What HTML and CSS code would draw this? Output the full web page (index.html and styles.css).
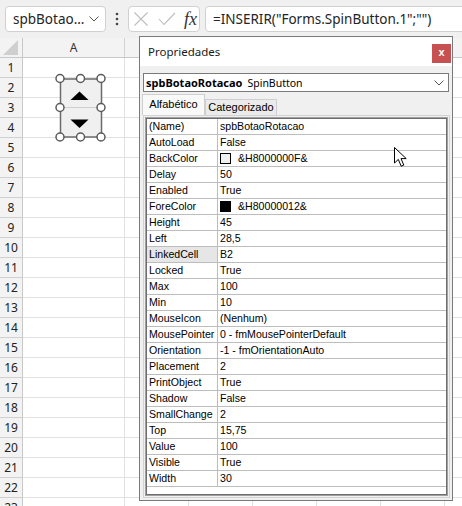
FILE: index.html
```html
<!DOCTYPE html>
<html lang="pt">
<head>
<meta charset="utf-8">
<title>Propriedades</title>
<link rel="stylesheet" href="styles.css">
</head>
<body>
<div class="topbar">
  <div class="namebox"><span>spbBotao...</span><svg width="10" height="6" viewBox="0 0 10 6"><polyline points="0.5,0.5 5,5 9.5,0.5" fill="none" stroke="#555" stroke-width="1"/></svg></div>
  <div class="dots"><svg width="4" height="14" viewBox="0 0 4 14"><circle cx="2" cy="2" r="1.3" fill="#444"/><circle cx="2" cy="7" r="1.3" fill="#444"/><circle cx="2" cy="12" r="1.3" fill="#444"/></svg></div>
  <div class="fxbox">
    <svg width="16" height="16" viewBox="0 0 16 16"><path d="M1.5,1.5 L14.5,14.5 M14.5,1.5 L1.5,14.5" stroke="#bdbdbd" stroke-width="1.1" fill="none"/></svg>
    <svg class="check" width="18" height="14" viewBox="0 0 18 14"><polyline points="1,7 6,12.5 17,1" fill="none" stroke="#bdbdbd" stroke-width="1.1"/></svg>
    <span class="fx">fx</span>
  </div>
  <div class="formula">=INSERIR("Forms.SpinButton.1";"")</div>
</div>

<div class="sheet">
  <div class="corner"><svg width="22" height="19" viewBox="0 0 22 19"><polygon points="18,2 18,17 3,17" fill="#cfcfcf"/></svg></div>
  <div class="colheads">
    <div class="ch a">A</div><div class="ch"></div><div class="ch"></div><div class="ch"></div><div class="ch"></div><div class="ch"></div><div class="ch"></div>
  </div>
  <div class="rowheads">
    <div class="rh">1</div><div class="rh">2</div><div class="rh">3</div><div class="rh">4</div><div class="rh">5</div><div class="rh">6</div><div class="rh">7</div><div class="rh">8</div><div class="rh">9</div><div class="rh">10</div><div class="rh">11</div><div class="rh">12</div><div class="rh">13</div><div class="rh">14</div><div class="rh">15</div><div class="rh">16</div><div class="rh">17</div><div class="rh">18</div><div class="rh">19</div><div class="rh">20</div><div class="rh">21</div><div class="rh">22</div><div class="rh">23</div>
  </div>
  <div class="cells">
    <div class="col a"></div><div class="col"></div><div class="col"></div><div class="col"></div><div class="col"></div><div class="col"></div><div class="col"></div>
  </div>
</div>

<svg class="spin" width="54" height="72" viewBox="0 0 54 72">
  <rect x="6.5" y="7" width="41" height="58" fill="#f0f0f0" stroke="#6b6b6b" stroke-width="1.5"/>
  <line x1="7" y1="35.5" x2="47" y2="35.5" stroke="#cfcfcf" stroke-width="1"/>
  <polygon points="16.5,28 34.5,28 25.5,19.5" fill="#000"/>
  <polygon points="16.5,47.5 34.5,47.5 25.5,56" fill="#000"/>
  <g fill="#fff" stroke="#5a5a5a" stroke-width="1.5">
    <circle cx="6" cy="6.5" r="4"/><circle cx="26.5" cy="6.5" r="4"/><circle cx="47" cy="6.5" r="4"/>
    <circle cx="6" cy="35.5" r="4"/><circle cx="47" cy="35.5" r="4"/>
    <circle cx="6" cy="65" r="4"/><circle cx="26.5" cy="65" r="4"/><circle cx="47" cy="65" r="4"/>
  </g>
</svg>

<div class="props">
  <div class="props-title"><span>Propriedades</span><div class="close">x</div></div>
  <div class="props-body">
    <div class="objsel"><b>spbBotaoRotacao</b><span class="type">SpinButton</span><svg class="chev" width="10" height="6" viewBox="0 0 10 6"><polyline points="0.5,0.5 5,5 9.5,0.5" fill="none" stroke="#555" stroke-width="1"/></svg></div>
    <div class="tabs"><div class="tab active">Alfabético</div><div class="tab">Categorizado</div></div>
    <div class="panel">
      <div class="list">
        <div class="rows">
          <div class="prop"><div class="k">(Name)</div><div class="v">spbBotaoRotacao</div></div>
          <div class="prop"><div class="k">AutoLoad</div><div class="v">False</div></div>
          <div class="prop"><div class="k">BackColor</div><div class="v"><span class="swatch light"></span>&amp;H8000000F&amp;</div></div>
          <div class="prop"><div class="k">Delay</div><div class="v">50</div></div>
          <div class="prop"><div class="k">Enabled</div><div class="v">True</div></div>
          <div class="prop"><div class="k">ForeColor</div><div class="v"><span class="swatch dark"></span>&amp;H80000012&amp;</div></div>
          <div class="prop"><div class="k">Height</div><div class="v">45</div></div>
          <div class="prop"><div class="k">Left</div><div class="v">28,5</div></div>
          <div class="prop"><div class="k sel">LinkedCell</div><div class="v">B2</div></div>
          <div class="prop"><div class="k">Locked</div><div class="v">True</div></div>
          <div class="prop"><div class="k">Max</div><div class="v">100</div></div>
          <div class="prop"><div class="k">Min</div><div class="v">10</div></div>
          <div class="prop"><div class="k">MouseIcon</div><div class="v">(Nenhum)</div></div>
          <div class="prop"><div class="k">MousePointer</div><div class="v">0 - fmMousePointerDefault</div></div>
          <div class="prop"><div class="k">Orientation</div><div class="v">-1 - fmOrientationAuto</div></div>
          <div class="prop"><div class="k">Placement</div><div class="v">2</div></div>
          <div class="prop"><div class="k">PrintObject</div><div class="v">True</div></div>
          <div class="prop"><div class="k">Shadow</div><div class="v">False</div></div>
          <div class="prop"><div class="k">SmallChange</div><div class="v">2</div></div>
          <div class="prop"><div class="k">Top</div><div class="v">15,75</div></div>
          <div class="prop"><div class="k">Value</div><div class="v">100</div></div>
          <div class="prop"><div class="k">Visible</div><div class="v">True</div></div>
          <div class="prop"><div class="k">Width</div><div class="v">30</div></div>
        </div>
      </div>
    </div>
  </div>
</div>

<svg class="cursor" width="14" height="21" viewBox="0 0 14 21"><path d="M0.5,0.5 L0.5,16 L4.3,12.4 L7.2,19.2 L9.8,18.1 L7,11.6 L12.2,11.6 Z" fill="#fff" stroke="#000" stroke-width="1" stroke-linejoin="round"/></svg>
</body>
</html>
```

FILE: styles.css
```css
* { box-sizing: border-box; }
html, body { margin: 0; padding: 0; }
body {
  width: 462px;
  height: 506px;
  overflow: hidden;
  position: relative;
  background: #fff;
  font-family: "Noto Sans", "Liberation Sans", sans-serif;
}

/* formula bar */
.topbar {
  height: 38px;
  background: #f0f0f0;
  display: flex;
  align-items: center;
  padding-left: 5px;
  overflow: hidden;
}
.namebox {
  width: 101px;
  height: 26px;
  flex: none;
  background: #fff;
  border: 1px solid #d0d0d0;
  border-radius: 4px;
  display: flex;
  align-items: center;
  justify-content: space-between;
  padding: 0 6px 0 7px;
  font-size: 13.5px;
  color: #242424;
}
.dots {
  width: 22px;
  flex: none;
  display: flex;
  justify-content: center;
}
.dots svg { display: block; }
.fxbox {
  width: 72px;
  height: 26px;
  flex: none;
  background: #fff;
  border: 1px solid #d0d0d0;
  border-radius: 4px;
  display: flex;
  align-items: center;
  padding-left: 4px;
}
.fxbox svg { display: block; }
.check { margin-left: 9px; }
.fx {
  font-family: "Liberation Serif", serif;
  font-style: italic;
  font-size: 18px;
  color: #333;
  margin-left: 8px;
  line-height: 1;
}
.formula {
  flex: 1;
  margin-left: 5px;
  margin-right: -4px;
  height: 26px;
  background: #fff;
  border: 1px solid #d0d0d0;
  border-radius: 4px;
  display: flex;
  align-items: center;
  padding-left: 7px;
  font-size: 13.5px;
  color: #242424;
  white-space: nowrap;
}

/* worksheet */
.sheet {
  display: grid;
  grid-template-columns: 23px 1fr;
  grid-template-rows: 20px auto;
}
.corner {
  background: #f3f3f3;
  border-right: 1px solid #c8c8c8;
  border-bottom: 1px solid #c8c8c8;
}
.corner svg { display: block; }
.colheads {
  display: flex;
  background: #f3f3f3;
  border-bottom: 1px solid #c8c8c8;
  overflow: hidden;
}
.ch {
  width: 64px;
  flex: none;
  border-right: 1px solid #d4d4d4;
  text-align: center;
  font-size: 12px;
  line-height: 19px;
  color: #333;
}
.ch.a { width: 102px; }
.rowheads { background: #f3f3f3; }
.rh {
  height: 20px;
  border-right: 1px solid #c8c8c8;
  border-bottom: 1px solid #d0d0d0;
  text-align: center;
  font-size: 12px;
  line-height: 19px;
  color: #222;
}
.cells {
  display: flex;
  overflow: hidden;
  background: repeating-linear-gradient(to bottom, #fff 0, #fff 19px, #e1e1e1 19px, #e1e1e1 20px);
}
.col {
  width: 64px;
  flex: none;
  border-right: 1px solid #e1e1e1;
}
.col.a { width: 102px; }

/* selected spin button on the sheet */
.spin {
  position: absolute;
  left: 54px;
  top: 72px;
}

/* properties window */
.props {
  position: absolute;
  left: 139px;
  top: 36px;
  width: 314px;
  height: 465px;
  border: 1px solid #7a7a7a;
  display: flex;
  flex-direction: column;
  background: #f0f0f0;
}
.props-title {
  height: 29px;
  flex: none;
  background: #fff;
  display: flex;
  justify-content: space-between;
  align-items: center;
  padding-left: 8px;
  font-size: 11.5px;
  color: #1a1a1a;
}
.close {
  align-self: flex-start;
  margin-top: 7px;
  margin-right: 1px;
  width: 19px;
  height: 19px;
  background: #c75050;
  color: #fff;
  font-family: "Liberation Sans", sans-serif;
  font-weight: bold;
  font-size: 11px;
  line-height: 17px;
  text-align: center;
}
.props-body {
  flex: 1;
  padding: 7px 2px 2px 3px;
  display: flex;
  flex-direction: column;
}
.objsel {
  height: 19px;
  width: 306px;
  background: #fff;
  border: 1px solid #7a7a7a;
  display: flex;
  align-items: center;
  padding: 0 4px 0 2px;
  font-size: 11px;
  color: #000;
}
.objsel b { font-weight: bold; }
.objsel .type { margin-left: 5px; font-size: 10.5px; }
.objsel .chev { margin-left: auto; display: block; }
.tabs {
  margin-top: 2px;
  height: 21px;
  display: flex;
  align-items: flex-end;
  font-family: "Liberation Sans", sans-serif;
  font-size: 11px;
  color: #000;
}
.tab {
  height: 16px;
  width: 72px;
  border: 1px solid #cfcfcf;
  border-bottom: none;
  background: #ebebeb;
  text-align: center;
  line-height: 15px;
}
.tab.active {
  height: 21px;
  width: 63px;
  margin-left: -1px;
  background: #f9f9f9;
  line-height: 19px;
  position: relative;
  z-index: 1;
}
.panel {
  flex: 1;
  width: 307px;
  border: 1px solid #d2d2d2;
  padding: 1px;
  background: #f0f0f0;
}
.list {
  height: 100%;
  border: 1px solid #a0a0a0;
}
.rows {
  height: 100%;
  border: 1px solid #6e6e6e;
  background: #fff;
  font-family: "Liberation Sans", sans-serif;
  font-size: 10.6px;
  color: #000;
}
.prop {
  display: grid;
  grid-template-columns: 71px 1fr;
  height: 16px;
  border-bottom: 1px solid #bdbdbd;
  line-height: 15px;
}
.k {
  border-right: 1px solid #bdbdbd;
  padding-left: 2px;
  white-space: nowrap;
  overflow: hidden;
}
.k.sel { background: #e6e6e6; }
.v {
  padding-left: 2px;
  display: flex;
  align-items: center;
  white-space: nowrap;
}
.swatch {
  width: 11px;
  height: 11px;
  border: 1px solid #000;
  margin-right: 7px;
  flex: none;
}
.swatch.light { background: #f0f0f0; }
.swatch.dark { background: #000; }

.cursor {
  position: absolute;
  left: 394px;
  top: 147px;
}
```
